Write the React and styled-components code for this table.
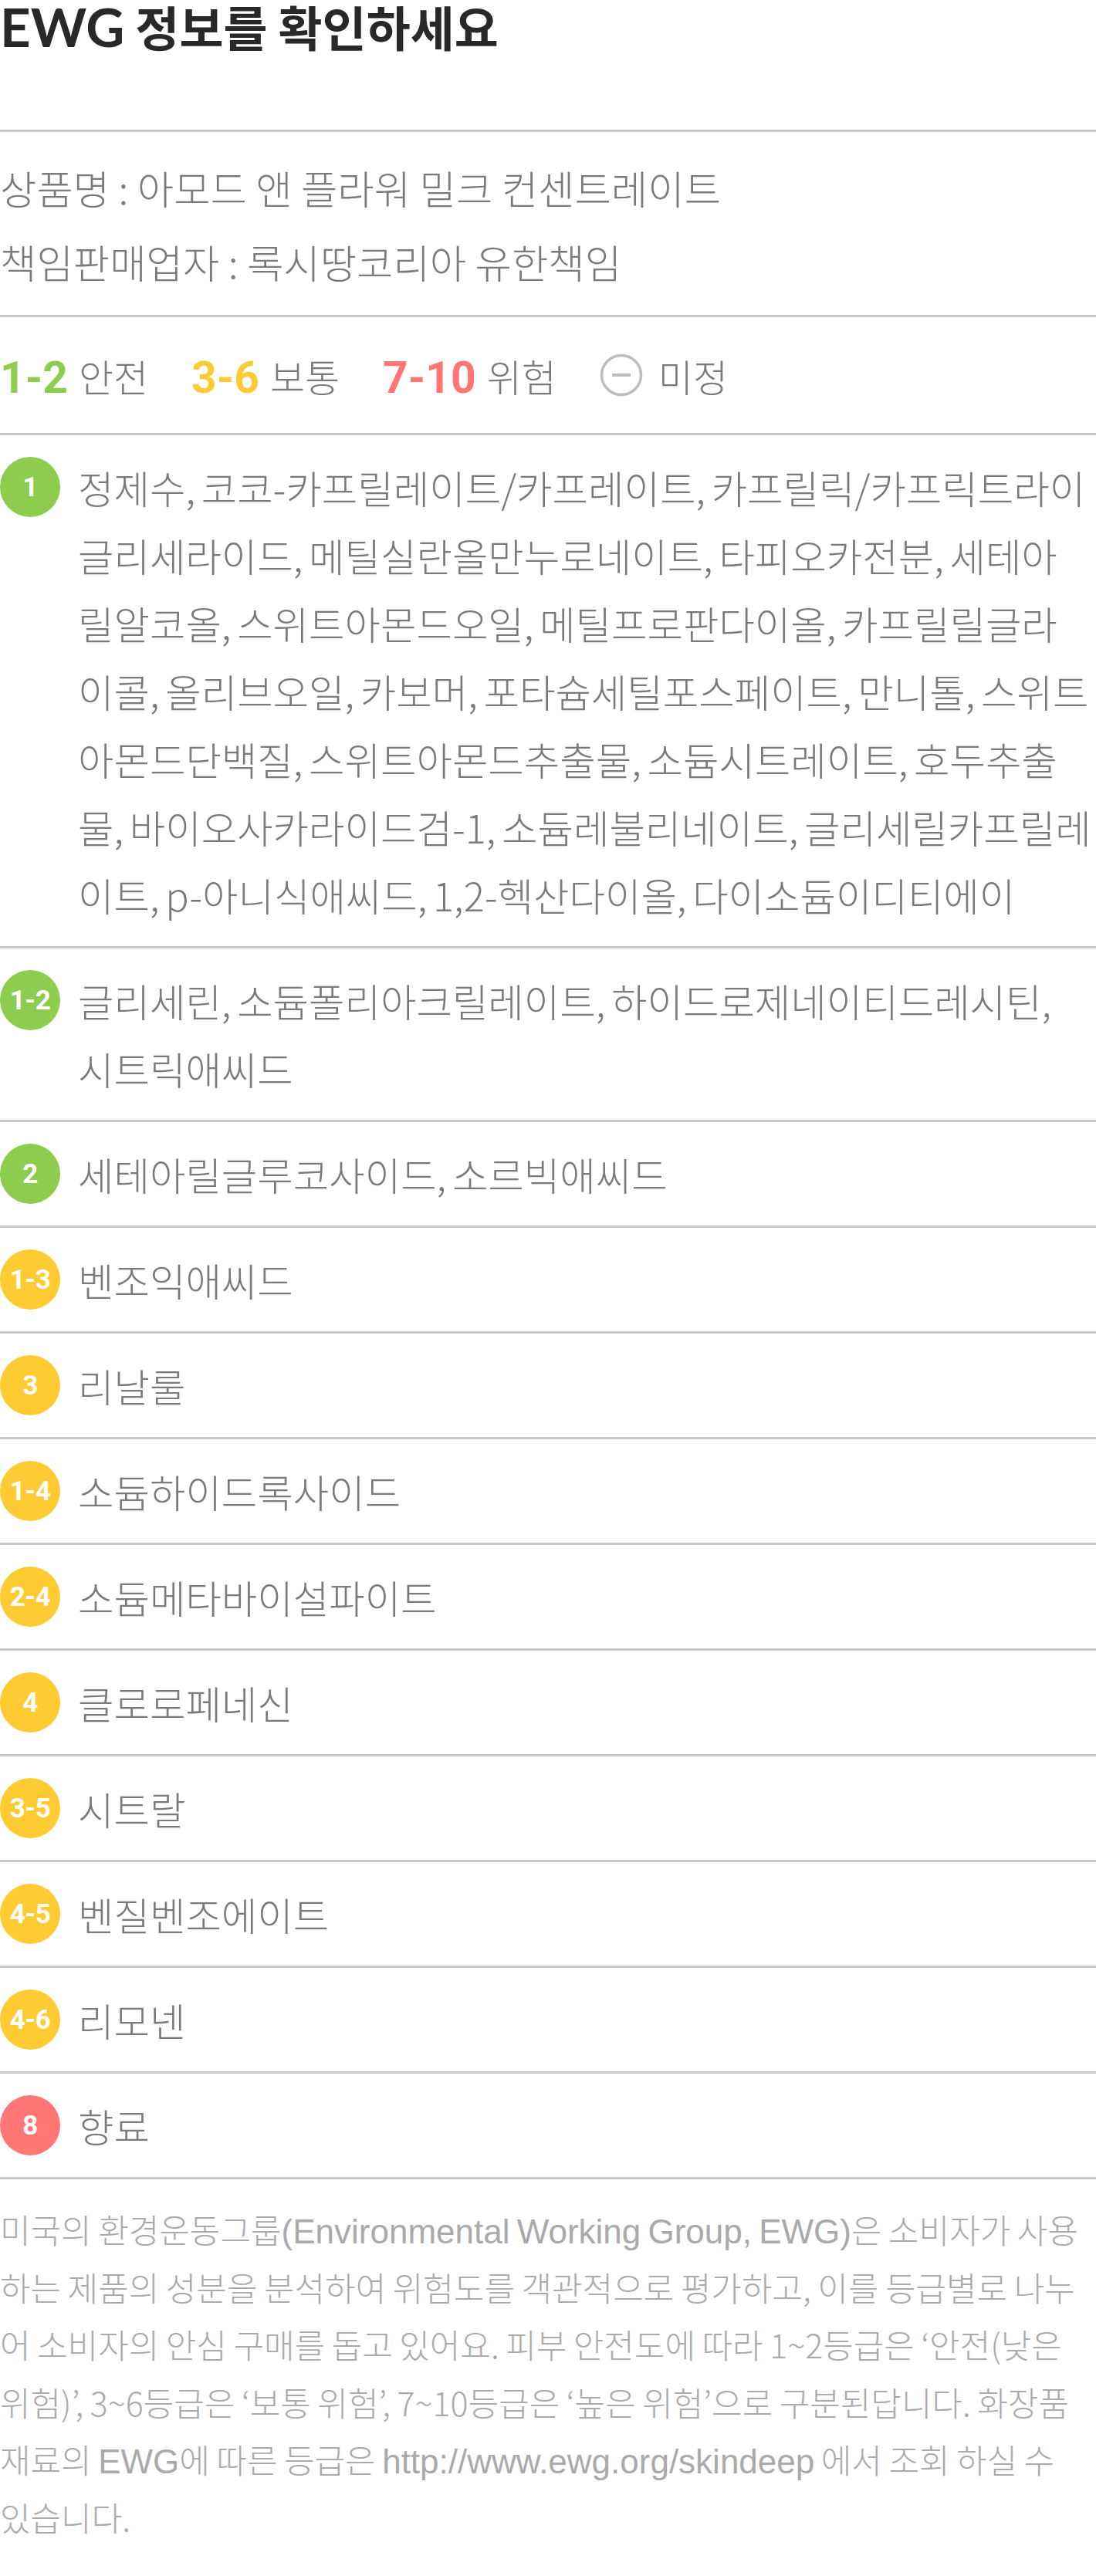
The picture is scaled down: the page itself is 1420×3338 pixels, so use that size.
import React from "react";
import styled, { createGlobalStyle } from "styled-components";

const COLORS = {
  safe: "#8ecc50",
  normal: "#ffcb33",
  danger: "#ff7675",
  line: "#c8c8c8",
  text: "#7a7a7a",
  title: "#282828",
  note: "#aaaaaa",
  muted: "#bdbdbd",
};

const KR = `"Noto Sans CJK KR", "Noto Sans", sans-serif`;
const NUM = `Roboto, "Liberation Sans", sans-serif`;

const INGREDIENTS = [
  {
    grade: "1",
    level: "safe",
    names:
      "정제수, 코코-카프릴레이트/카프레이트, 카프릴릭/카프릭트라이글리세라이드, 메틸실란올만누로네이트, 타피오카전분, 세테아릴알코올, 스위트아몬드오일, 메틸프로판다이올, 카프릴릴글라이콜, 올리브오일, 카보머, 포타슘세틸포스페이트, 만니톨, 스위트아몬드단백질, 스위트아몬드추출물, 소듐시트레이트, 호두추출물, 바이오사카라이드검-1, 소듐레불리네이트, 글리세릴카프릴레이트, p-아니식애씨드, 1,2-헥산다이올, 다이소듐이디티에이",
  },
  { grade: "1-2", level: "safe", names: "글리세린, 소듐폴리아크릴레이트, 하이드로제네이티드레시틴, 시트릭애씨드" },
  { grade: "2", level: "safe", names: "세테아릴글루코사이드, 소르빅애씨드" },
  { grade: "1-3", level: "normal", names: "벤조익애씨드" },
  { grade: "3", level: "normal", names: "리날룰" },
  { grade: "1-4", level: "normal", names: "소듐하이드록사이드" },
  { grade: "2-4", level: "normal", names: "소듐메타바이설파이트" },
  { grade: "4", level: "normal", names: "클로로페네신" },
  { grade: "3-5", level: "normal", names: "시트랄" },
  { grade: "4-5", level: "normal", names: "벤질벤조에이트" },
  { grade: "4-6", level: "normal", names: "리모넨" },
  { grade: "8", level: "danger", names: "향료" },
];

const LEGEND = [
  { range: "1-2", level: "safe", label: "안전" },
  { range: "3-6", level: "normal", label: "보통" },
  { range: "7-10", level: "danger", label: "위험" },
];

const GlobalStyle = createGlobalStyle`
  html, body {
    margin: 0;
    padding: 0;
    background: #fff;
  }
  body {
    font-family: ${KR};
    -webkit-font-smoothing: antialiased;
  }
`;

const App = () => {
  return (
    <>
      <GlobalStyle />
      <Page>
        <Title>
          <Brand>EWG</Brand> 정보를 확인하세요
        </Title>

        <Info>
          <InfoLine>상품명 : 아모드 앤 플라워 밀크 컨센트레이트</InfoLine>
          <InfoLine>책임판매업자 : 록시땅코리아 유한책임</InfoLine>
        </Info>

        <Legend>
          {LEGEND.map((item) => (
            <LegendItem key={item.range}>
              <Range $level={item.level}>{item.range}</Range>
              <LegendLabel>{item.label}</LegendLabel>
            </LegendItem>
          ))}
          <LegendItem $wide>
            <svg width="56" height="56" viewBox="0 0 56 56" aria-hidden="true">
              <circle cx="28" cy="28" r="25.5" fill="none" stroke={COLORS.muted} strokeWidth="3.5" />
              <line x1="16" y1="28" x2="40" y2="28" stroke={COLORS.muted} strokeWidth="4" />
            </svg>
            <LegendLabel>미정</LegendLabel>
          </LegendItem>
        </Legend>

        <List>
          {INGREDIENTS.map((row) => (
            <Row key={row.grade}>
              <Badge $level={row.level}>{row.grade}</Badge>
              <Names>{row.names}</Names>
            </Row>
          ))}
        </List>

        <Note>
          미국의 환경운동그룹<En>(Environmental Working Group, EWG)</En>은 소비자가 사용하는 제품의 성분을
          분석하여 위험도를 객관적으로 평가하고, 이를 등급별로 나누어 소비자의 안심 구매를 돕고 있어요. 피부
          안전도에 따라 1~2등급은 ‘안전(낮은 위험)’, 3~6등급은 ‘보통 위험’, 7~10등급은 ‘높은 위험’으로
          구분된답니다. 화장품 재료의 <En>EWG</En>에 따른 등급은 <En>http://www.ewg.org/skindeep</En> 에서 조회
          하실 수 있습니다.
        </Note>
      </Page>
    </>
  );
};

const Page = styled.main`
  width: 1420px;
  color: ${COLORS.text};
`;

const Title = styled.h1`
  margin: 0;
  height: 66px;
  padding-bottom: 102px;
  border-bottom: 3px solid ${COLORS.line};
  font-family: ${KR};
  font-size: 62px;
  font-weight: 700;
  line-height: 66px;
  color: ${COLORS.title};
  white-space: nowrap;
`;

const Brand = styled.span`
  font-family: Lato, "Liberation Sans", sans-serif;
  font-size: 69px;
  font-weight: 700;
  line-height: 1;
`;

const Info = styled.section`
  padding: 24px 0 21px;
  border-bottom: 3px solid ${COLORS.line};
`;

const InfoLine = styled.p`
  margin: 0;
  font-size: 51.5px;
  font-weight: 300;
  line-height: 96px;
`;

const Legend = styled.section`
  display: flex;
  align-items: center;
  gap: 56px;
  height: 150px;
  border-bottom: 3px solid ${COLORS.line};
`;

const LegendItem = styled.div`
  display: flex;
  align-items: center;
  gap: ${(p) => (p.$wide ? "20px" : "14px")};

  svg {
    display: block;
    flex: none;
  }
`;

const Range = styled.span`
  font-family: ${NUM};
  font-size: 57px;
  font-weight: 700;
  line-height: 1;
  margin-top: 6px;
  color: ${(p) => COLORS[p.$level]};
`;

const LegendLabel = styled.span`
  font-size: 49px;
  font-weight: 300;
  line-height: 1;
`;

const List = styled.ul`
  margin: 0;
  padding: 0;
  list-style: none;
`;

const Row = styled.li`
  display: flex;
  align-items: flex-start;
  gap: 23px;
  padding: 23px 5px 23px 0;
  border-bottom: 3px solid ${COLORS.line};
`;

const Badge = styled.span`
  flex: none;
  display: flex;
  align-items: center;
  justify-content: center;
  width: 78px;
  height: 78px;
  margin-top: 5px;
  border-radius: 50%;
  background: ${(p) => COLORS[p.$level]};
  color: #fff;
  font-family: ${NUM};
  font-size: 35px;
  font-weight: 700;
  letter-spacing: -0.5px;
`;

const Names = styled.p`
  flex: 1;
  margin: 0;
  font-size: 50.5px;
  font-weight: 300;
  line-height: 88px;
  word-spacing: -3.5px;
`;

const Note = styled.p`
  margin: 0;
  padding: 27px 15px 30px 0;
  font-family: ${KR};
  font-size: 43px;
  font-weight: 300;
  line-height: 74.5px;
  word-spacing: -1px;
  color: ${COLORS.note};
`;

const En = styled.span`
  font-family: "Liberation Sans", sans-serif;
  font-size: 44px;
  line-height: 1;
  word-spacing: -3px;
`;

export default App;
